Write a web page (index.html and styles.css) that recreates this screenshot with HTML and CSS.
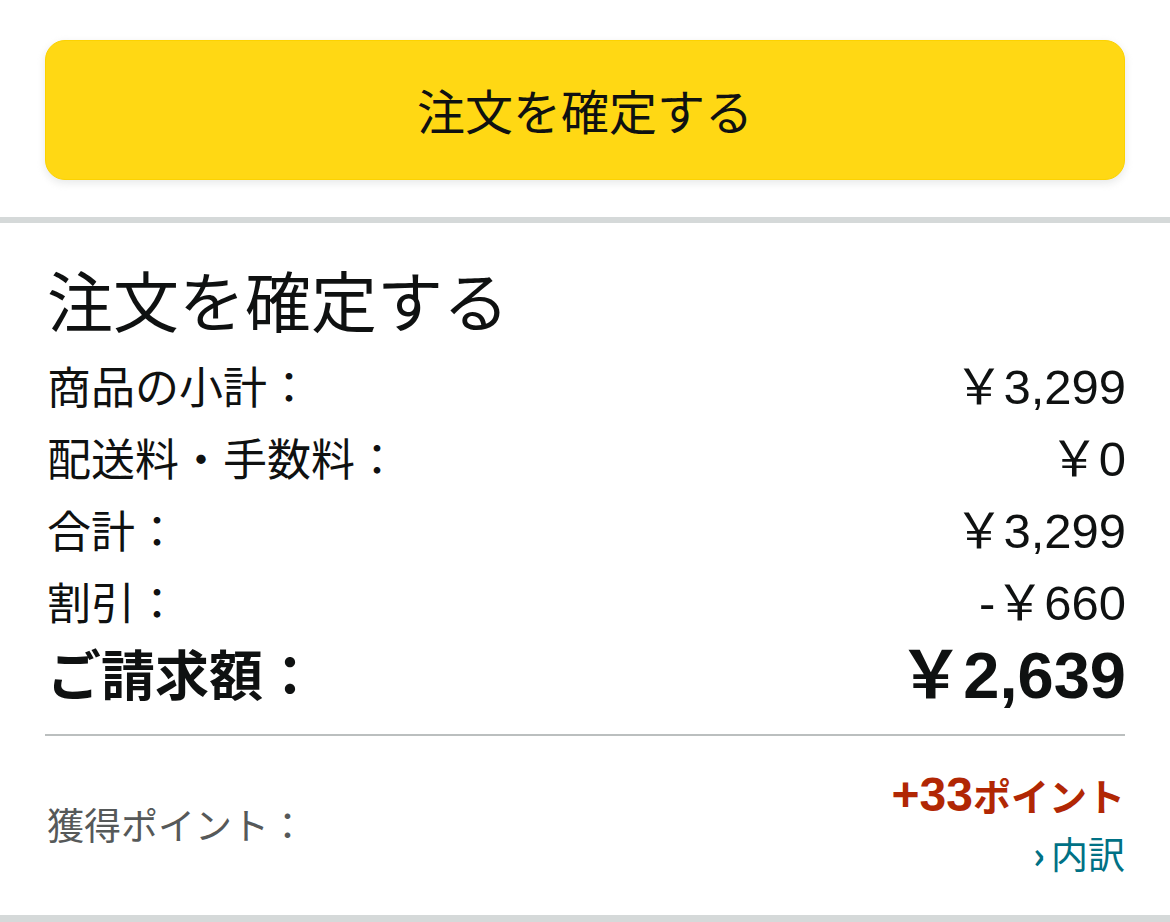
FILE: index.html
```html
<!DOCTYPE html>
<html lang="ja">
<head>
    <meta charset="UTF-8">
    <meta name="viewport" content="width=device-width, initial-scale=1.0">
    <title>注文を確定する</title>
    <link rel="stylesheet" href="styles.css">
</head>
<body>
    <div class="place-order">
        <button type="button" class="place-order-btn">注文を確定する</button>
    </div>

    <div class="summary">
        <h2>注文を確定する</h2>
        <div class="summary-row">
            <span>商品の小計：</span>
            <span class="price">￥3,299</span>
        </div>
        <div class="summary-row">
            <span>配送料・手数料：</span>
            <span class="price">￥0</span>
        </div>
        <div class="summary-row">
            <span>合計：</span>
            <span class="price">￥3,299</span>
        </div>
        <div class="summary-row">
            <span>割引：</span>
            <span class="price">-￥660</span>
        </div>
        <div class="summary-row total">
            <span>ご請求額：</span>
            <span class="price">￥2,639</span>
        </div>

        <div class="points">
            <span class="points-label">獲得ポイント：</span>
            <div class="points-value">
                <span class="points-amount"><span class="num">+33</span>ポイント</span>
                <a href="#" class="points-link"><span class="chevron">›</span>内訳</a>
            </div>
        </div>
    </div>
</body>
</html>
```

FILE: styles.css
```css
body {
    margin: 0;
    background: #fff;
    color: #0f1111;
    font-family: 'Noto Sans CJK JP', 'Noto Sans', sans-serif;
}
.place-order {
    padding: 40px 45px 37px;
    border-bottom: 6px solid #d5d9d9;
}
.place-order-btn {
    display: block;
    width: 100%;
    height: 140px;
    padding-bottom: 4px;
    background: #ffd814;
    border: 1px solid #fcd200;
    border-radius: 20px;
    box-shadow: 0 3px 8px rgba(213, 217, 217, 0.6);
    font-family: inherit;
    font-size: 48px;
    color: #0f1111;
    cursor: pointer;
}
.summary {
    padding: 35px 45px 33px 47px;
    border-bottom: 7px solid #d5d9d9;
}
.summary h2 {
    margin: 0 0 13px;
    font-size: 66px;
    font-weight: normal;
    line-height: 80px;
}
.summary-row {
    display: flex;
    justify-content: space-between;
    align-items: center;
    height: 72px;
    font-size: 44px;
    line-height: 1;
}
.summary-row span {
    padding-bottom: 4px;
}
/* 金額は欧文フォントで数字を表示 */
.summary-row .price {
    font-family: 'Liberation Sans', 'Noto Sans CJK JP', sans-serif;
    font-size: 49px;
    margin-right: -1px;
    padding-bottom: 0;
}
.summary-row.total {
    font-size: 54px;
    font-weight: bold;
    padding-bottom: 23px;
    border-bottom: 2px solid #bbbfbf;
    margin-left: -2px;
    padding-left: 2px;
    box-sizing: content-box;
}
.summary-row.total .price {
    font-size: 65px;
}
.points {
    display: flex;
    justify-content: space-between;
    align-items: center;
    padding-top: 30px;
}
.points-label {
    font-size: 37px;
    color: #565959;
}
.points-value {
    display: flex;
    flex-direction: column;
    align-items: flex-end;
}
.points-amount {
    height: 58px;
    line-height: 58px;
    font-size: 38px;
    font-weight: bold;
    color: #b12704;
}
.points-amount .num {
    font-family: 'Liberation Sans', 'Noto Sans CJK JP', sans-serif;
    font-size: 48px;
}
.points-link {
    height: 58px;
    line-height: 58px;
    font-size: 37px;
    color: #007185;
    text-decoration: none;
}
.chevron {
    font-weight: bold;
    margin-right: 6px;
}
```
